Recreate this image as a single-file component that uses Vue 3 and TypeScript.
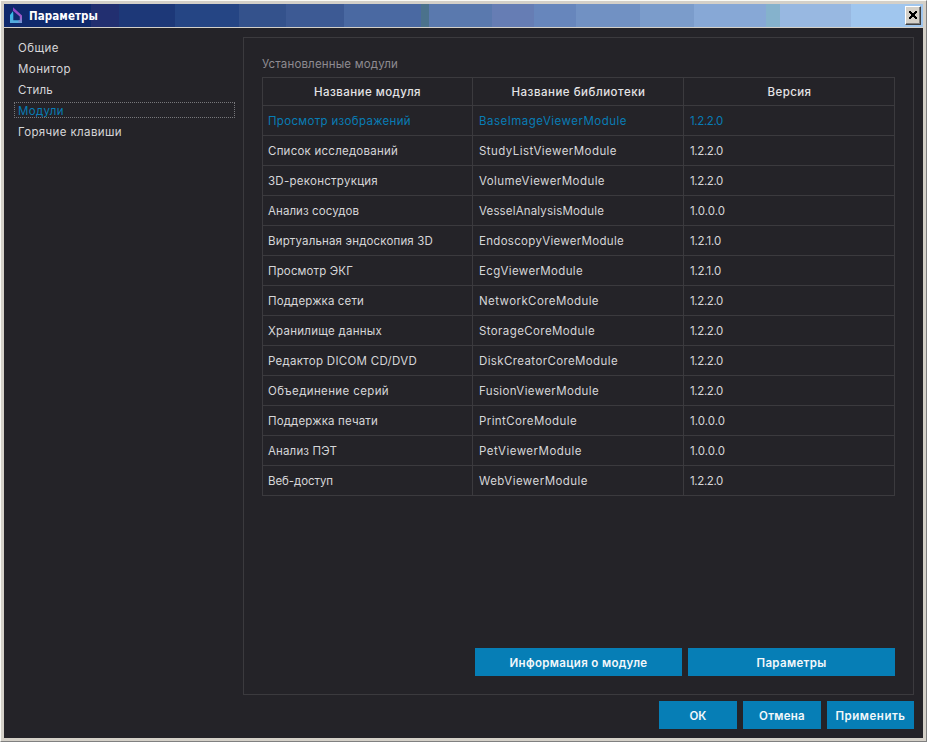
<script setup lang="ts">
import type { Directive } from 'vue'

type Label = [text: string, width: number]

// Spreads the letters of a label over the given width in pixels.
const vFit: Directive<HTMLElement, number> = {
  mounted(el, { value }) {
    const natural = el.getBoundingClientRect().width
    const count = (el.textContent ?? '').length
    el.style.letterSpacing = `${(value - natural) / count}px`
  },
}

const bands: [width: number, color: string][] = [
  [87, '#0f296c'], [28, '#222f70'], [56, '#1d3878'], [64, '#254584'],
  [47, '#34528c'], [58, '#3d5a94'], [77, '#4a69a2'], [8, '#4b728c'],
  [63, '#5a79ae'], [42, '#667db4'], [42, '#6786bc'], [64, '#7191c3'],
  [54, '#7b9ccb'], [72, '#87a8d6'], [14, '#85b2cc'], [71, '#98b8e1'],
  [72, '#a0c6ee'],
]

const sections: Label[] = [
  ['Общие', 41], ['Монитор', 53], ['Стиль', 35], ['Модули', 46], ['Горячие клавиши', 104],
]
const activeSection = 3

const headers: Label[] = [
  ['Название модуля', 107], ['Название библиотеки', 134], ['Версия', 44],
]

const rows: Label[][] = [
  [['Просмотр изображений', 143], ['BaseImageViewerModule', 148], ['1.2.2.0', 33]],
  [['Список исследований', 130], ['StudyListViewerModule', 138], ['1.2.2.0', 33]],
  [['3D-реконструкция', 110], ['VolumeViewerModule', 126], ['1.2.2.0', 33]],
  [['Анализ сосудов', 91], ['VesselAnalysisModule', 125], ['1.0.0.0', 35]],
  [['Виртуальная эндоскопия 3D', 165], ['EndoscopyViewerModule', 145], ['1.2.1.0', 31]],
  [['Просмотр ЭКГ', 85], ['EcgViewerModule', 104], ['1.2.1.0', 31]],
  [['Поддержка сети', 96], ['NetworkCoreModule', 120], ['1.2.2.0', 33]],
  [['Хранилище данных', 114], ['StorageCoreModule', 116], ['1.2.2.0', 33]],
  [['Редактор DICOM CD/DVD', 149], ['DiskCreatorCoreModule', 139], ['1.2.2.0', 33]],
  [['Объединение серий', 121], ['FusionViewerModule', 120], ['1.2.2.0', 33]],
  [['Поддержка печати', 110], ['PrintCoreModule', 98], ['1.0.0.0', 35]],
  [['Анализ ПЭТ', 69], ['PetViewerModule', 103], ['1.0.0.0', 35]],
  [['Веб-доступ', 65], ['WebViewerModule', 109], ['1.2.2.0', 33]],
]

const actions: Label[] = [['Информация о модуле', 138], ['Параметры', 70]]
const dialogButtons: Label[] = [['ОК', 17], ['Отмена', 46], ['Применить', 70]]
</script>

<template>
  <div class="window">
    <header class="titlebar">
      <div class="bands">
        <span v-for="([w, c], i) in bands" :key="i" :style="{ width: w + 'px', background: c }"></span>
      </div>
      <div class="caption">
        <svg class="logo" width="14" height="17" viewBox="0 0 14 17">
          <defs>
            <linearGradient id="left" x1="0" y1="0" x2="0" y2="1">
              <stop offset="0" stop-color="#2cc0ea" />
              <stop offset="1" stop-color="#58a9dc" />
            </linearGradient>
            <linearGradient id="right" x1="0" y1="0" x2="0" y2="1">
              <stop offset="0" stop-color="#8a3dc4" />
              <stop offset=".6" stop-color="#a05ac8" />
              <stop offset="1" stop-color="#6c9ad2" />
            </linearGradient>
          </defs>
          <path d="M4 4.3 L1 8 V16 H13 V13.3 H4.3 V7.5 Z" fill="url(#left)" />
          <path d="M4 .3 L13 8.5 V16 H9.5 V13.3 H10.8 V9.5 L4 3.7 Z" fill="url(#right)" />
        </svg>
        <span v-fit="69" class="title">Параметры</span>
      </div>
      <button class="close" aria-label="Закрыть">
        <svg width="8" height="8" viewBox="0 0 8 8" shape-rendering="crispEdges">
          <path
            d="M0 0h2v1h1v1h2v-1h1v-1h2v2h-1v1h-1v2h1v1h1v2h-2v-1h-1v-1h-2v1h-1v1h-2v-2h1v-1h1v-2h-1v-1h-1z"
            fill="#000"
          />
        </svg>
      </button>
    </header>

    <main class="body">
      <nav class="sections">
        <div v-for="([text, w], i) in sections" :key="text" class="section" :class="{ active: i === activeSection }">
          <span v-fit="w">{{ text }}</span>
        </div>
      </nav>

      <div class="content">
        <section class="panel">
          <div class="group-title"><span v-fit="136">Установленные модули</span></div>
          <div class="table">
            <div class="row head">
              <div v-for="[text, w] in headers" :key="text" class="cell"><span v-fit="w">{{ text }}</span></div>
            </div>
            <div v-for="(row, i) in rows" :key="i" class="row" :class="{ selected: i === 0 }">
              <div v-for="([text, w], j) in row" :key="j" class="cell"><span v-fit="w">{{ text }}</span></div>
            </div>
          </div>
          <div class="actions">
            <button v-for="[text, w] in actions" :key="text" class="button"><span v-fit="w">{{ text }}</span></button>
          </div>
        </section>
        <footer class="footer">
          <button v-for="[text, w] in dialogButtons" :key="text" class="button"><span v-fit="w">{{ text }}</span></button>
        </footer>
      </div>
    </main>
  </div>
</template>

<style>
body {
  margin: 0;
  overflow: hidden;
}
</style>

<style scoped>
* {
  box-sizing: border-box;
}
.window {
  width: 927px;
  height: 742px;
  display: flex;
  flex-direction: column;
  padding: 3px;
  border: 1px solid;
  border-color: #fafaf5 #808080 #808080 #fafaf5;
  background: #d4d0c8;
  color: #d6d6d8;
  font: 11.5px/16px Inter, "Noto Sans", sans-serif;
  white-space: nowrap;
}
.titlebar {
  position: relative;
  height: 23px;
  margin-bottom: 1px;
  flex: none;
}
.bands {
  position: absolute;
  inset: 0;
  display: flex;
}
.caption {
  position: absolute;
  left: 5px;
  top: 3px;
  display: flex;
  align-items: center;
  gap: 6px;
}
.logo {
  display: block;
}
.title {
  color: #fff;
  padding-top: 1px;
  font: bold 11.5px/16px "DejaVu Sans Condensed", "DejaVu Sans", sans-serif;
}
.close {
  position: absolute;
  right: 2px;
  top: 2px;
  width: 16px;
  height: 19px;
  padding: 0 0 1px;
  display: flex;
  align-items: center;
  justify-content: center;
  background: #d4d0c8;
  border: 1px solid;
  border-color: #fff #404040 #404040 #fff;
  box-shadow: inset -1px -1px #808080;
}
.body {
  flex: 1;
  display: flex;
  background: #242328;
}
.sections {
  width: 239px;
  flex: none;
  padding: 11px 8px 0 10px;
}
.section {
  height: 16px;
  margin-bottom: 5px;
  padding: 2px 0 0 4px;
  display: flex;
  align-items: center;
}
.section.active {
  color: #087cb5;
  outline: 1px dotted #77777b;
  outline-offset: -1px;
}
.content {
  flex: 1;
  display: flex;
  flex-direction: column;
  padding: 9px 9px 9px 0;
}
.panel {
  height: 658px;
  flex: none;
  display: flex;
  flex-direction: column;
  border: 1px solid #3b3a3e;
  padding: 18px 18px;
}
.group-title {
  height: 21px;
  color: #8e8b91;
}
.table {
  width: 633px;
  border: 1px solid #3b3a3e;
  border-bottom: 0;
}
.row {
  display: grid;
  grid-template-columns: 210px 211px 210px;
  height: 30px;
  border-bottom: 1px solid #3b3a3e;
}
.row.head {
  height: 28px;
  font-weight: 500;
}
.row.selected {
  color: #087cb5;
}
.cell {
  display: flex;
  align-items: center;
  padding: 1px 5px 0;
  border-right: 1px solid #3b3a3e;
}
.cell:last-child {
  border-right: 0;
}
.cell:nth-child(n + 2) {
  padding-left: 6px;
}
.head .cell {
  justify-content: center;
  color: #e4e4e6;
}
.actions {
  display: flex;
  justify-content: flex-end;
  gap: 6px;
  margin-top: auto;
}
.actions .button {
  width: 207px;
}
.button {
  width: 78px;
  height: 28px;
  padding: 2px 0 0;
  border: 0;
  background: #067eb6;
  color: #f2f8fb;
  font: 600 11.5px/16px Inter, "Noto Sans", sans-serif;
}
.footer {
  display: flex;
  justify-content: flex-end;
  gap: 6px;
  margin-top: 6px;
}
.footer .button:last-child {
  width: 87px;
}
</style>
